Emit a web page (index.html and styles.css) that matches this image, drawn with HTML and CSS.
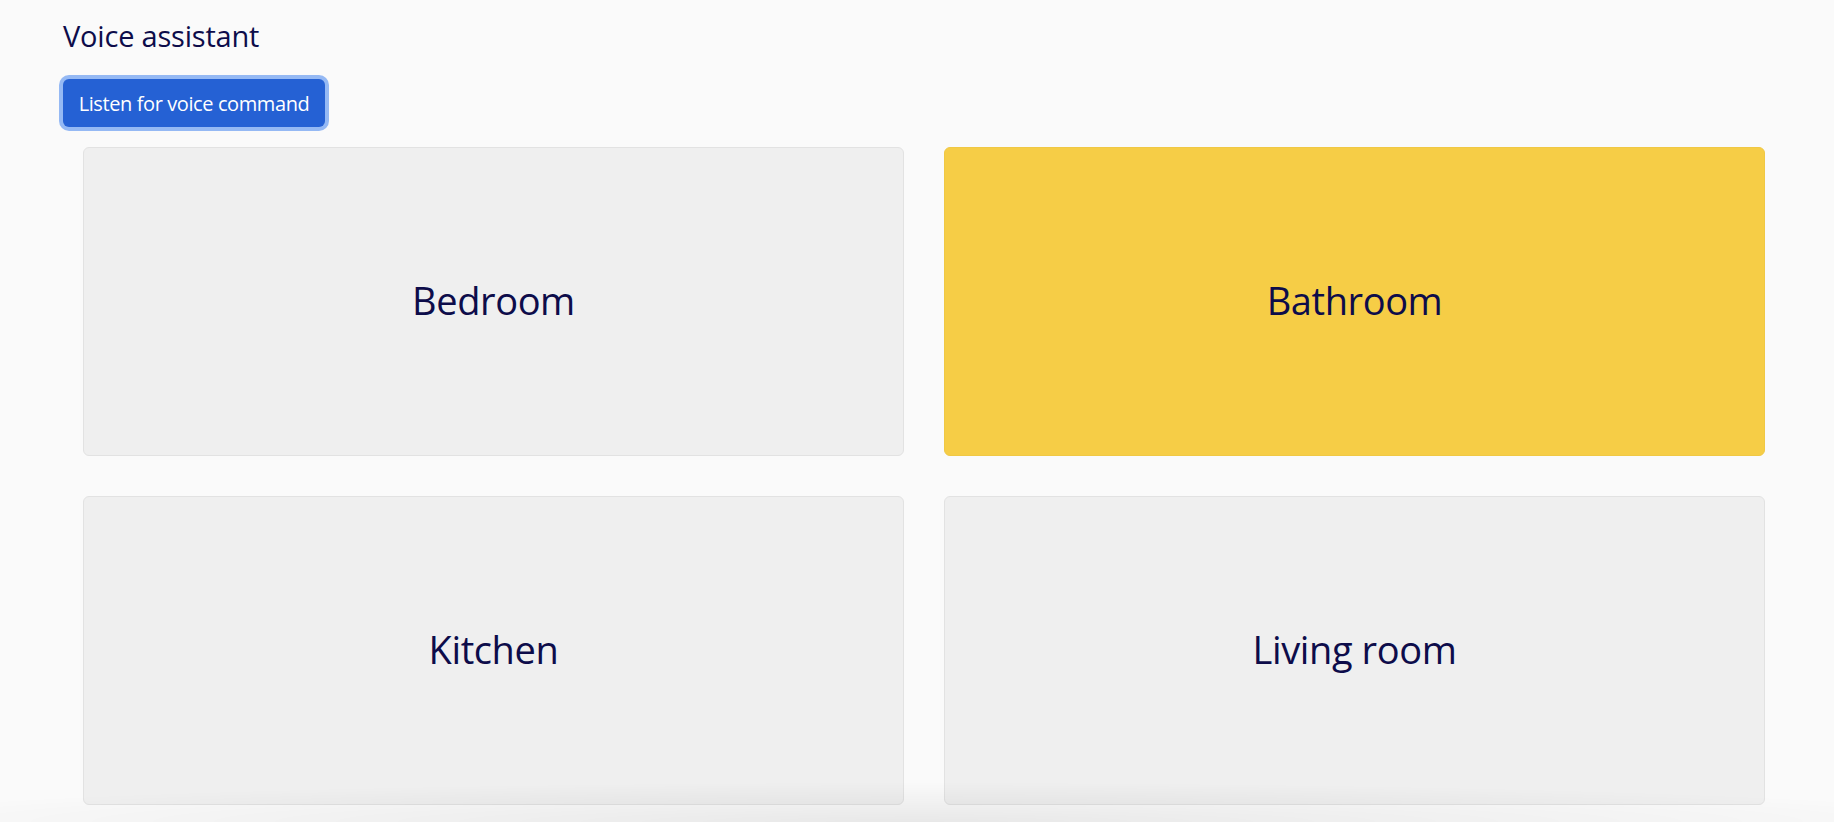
FILE: index.html
```html
<!DOCTYPE html>
<html lang="en">
<head>
<meta charset="utf-8">
<title>Voice assistant</title>
<link rel="stylesheet" href="styles.css">
</head>
<body>
<main class="page">
  <h1 class="title">Voice assistant</h1>
  <button class="listen-btn" type="button">Listen for voice command</button>
  <section class="rooms">
    <div class="room">Bedroom</div>
    <div class="room room-active">Bathroom</div>
    <div class="room">Kitchen</div>
    <div class="room">Living room</div>
  </section>
</main>
<div class="bottom-shade"></div>
</body>
</html>
```
FILE: styles.css
```css
html, body {
  margin: 0;
  padding: 0;
  background: #fafafa;
  height: 100%;
  overflow: hidden;
}
body {
  font-family: "Open Sans", "Noto Sans", sans-serif;
  color: #0d0c4a;
}
.page {
  padding: 18px 69px 0 63px;
  display: flex;
  flex-direction: column;
  align-items: flex-start;
}
.title {
  margin: 0;
  font-size: 29px;
  font-weight: 500;
  line-height: 36px;
  letter-spacing: -0.2px;
}
.listen-btn {
  margin-top: 25px;
  height: 48px;
  width: 262px;
  border: none;
  border-radius: 6px;
  background: #2561d4;
  color: #ffffff;
  font-family: "Open Sans", "Noto Sans", sans-serif;
  font-size: 20px;
  font-weight: 500;
  letter-spacing: -0.4px;
  box-shadow: 0 0 0 4px #95b9f4;
  padding: 0;
}
.rooms {
  align-self: stretch;
  margin: 20px 0 0 20px;
  display: grid;
  grid-template-columns: 1fr 1fr;
  grid-auto-rows: 309px;
  column-gap: 40px;
  row-gap: 40px;
}
.room {
  background: #efefef;
  border: 1px solid #e2e2e2;
  border-radius: 6px;
  display: flex;
  align-items: center;
  justify-content: center;
  padding-bottom: 4px;
  box-sizing: border-box;
  font-size: 38px;
  font-weight: 500;
  letter-spacing: -0.4px;
}
.room-active {
  background: #f6cd46;
  border-color: #f0c844;
}
.bottom-shade {
  position: fixed;
  left: 0;
  right: 0;
  bottom: 0;
  height: 40px;
  pointer-events: none;
  background: radial-gradient(ellipse 60% 100% at 50% 100%, rgba(0,0,0,0.07), rgba(0,0,0,0) 100%);
}
```
